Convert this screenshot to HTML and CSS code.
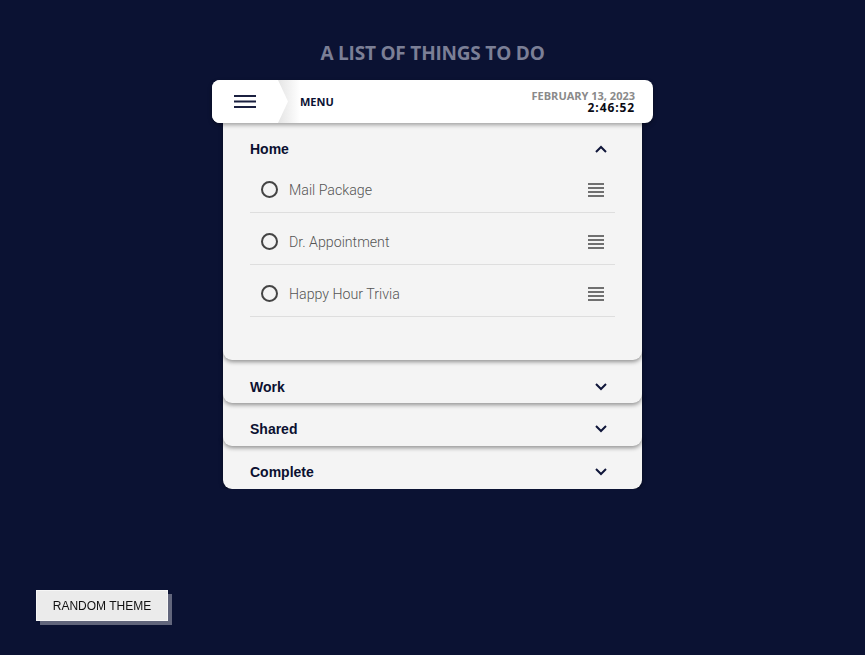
FILE: index.html
```html
<!DOCTYPE html>
<html lang="en">
<head>
  <meta charset="UTF-8" />
  <meta name="viewport" content="width=device-width, initial-scale=1.0"/>
  <title>A list of things to do</title>
  <link rel="stylesheet" href="styles.css">
</head>
<body>
  <div class="app">
    <h1 class="title">A LIST OF THINGS TO DO</h1>

    <header class="topbar">
      <div class="burger">
        <svg width="22" height="13" viewBox="0 0 22 13"><path d="M0 1h22M0 6.5h22M0 12h22" stroke="#1b2040" stroke-width="2"/></svg>
      </div>
      <div class="menu-label">MENU</div>
      <div class="clock">
        <span class="date">FEBRUARY 13, 2023</span>
        <span class="time">2:46:52</span>
      </div>
    </header>

    <section class="group open g1">
      <div class="group-head">
        <span>Home</span>
        <svg class="chev" width="12" height="8" viewBox="0 0 12 8"><path d="M1 7l5-5 5 5" fill="none" stroke="#10163a" stroke-width="2"/></svg>
      </div>
      <ul class="tasks">
        <li>
          <span class="check"></span>
          <span class="task-name">Mail Package</span>
          <svg class="drag" width="16" height="14" viewBox="0 0 16 14"><path d="M0 1h16M0 5h16M0 9h16M0 13h16" stroke="#444" stroke-width="1.6"/></svg>
        </li>
        <li>
          <span class="check"></span>
          <span class="task-name">Dr. Appointment</span>
          <svg class="drag" width="16" height="14" viewBox="0 0 16 14"><path d="M0 1h16M0 5h16M0 9h16M0 13h16" stroke="#444" stroke-width="1.6"/></svg>
        </li>
        <li>
          <span class="check"></span>
          <span class="task-name">Happy Hour Trivia</span>
          <svg class="drag" width="16" height="14" viewBox="0 0 16 14"><path d="M0 1h16M0 5h16M0 9h16M0 13h16" stroke="#444" stroke-width="1.6"/></svg>
        </li>
      </ul>
    </section>

    <section class="group g2">
      <div class="group-head">
        <span>Work</span>
        <svg class="chev" width="12" height="8" viewBox="0 0 12 8"><path d="M1 1l5 5 5-5" fill="none" stroke="#10163a" stroke-width="2"/></svg>
      </div>
    </section>

    <section class="group g3">
      <div class="group-head">
        <span>Shared</span>
        <svg class="chev" width="12" height="8" viewBox="0 0 12 8"><path d="M1 1l5 5 5-5" fill="none" stroke="#10163a" stroke-width="2"/></svg>
      </div>
    </section>

    <section class="group g4">
      <div class="group-head">
        <span>Complete</span>
        <svg class="chev" width="12" height="8" viewBox="0 0 12 8"><path d="M1 1l5 5 5-5" fill="none" stroke="#10163a" stroke-width="2"/></svg>
      </div>
    </section>
  </div>

  <button class="theme-btn">RANDOM THEME</button>
</body>
</html>
```

FILE: styles.css
```css
body { margin: 0; background: #0b1233; font-family: 'Open Sans', sans-serif; }
.app { width: 441px; margin: 0 auto; }
.title { margin: 0; padding-top: 40px; height: 26px; line-height: 26px; text-align: center; font-size: 19px; font-weight: 700; color: #7b7f96; letter-spacing: -0.2px; }
.topbar { position: relative; z-index: 10; margin-top: 14px; height: 43px; background: #fff; border-radius: 8px; display: flex; align-items: center; box-shadow: 0 2px 4px rgba(0,0,0,0.35); overflow: hidden; }
.burger { position: relative; width: 66px; height: 100%; display: flex; align-items: center; justify-content: center; background: #fff; z-index: 2; }
.burger::after { content: ""; position: absolute; right: -10px; top: 0; width: 10px; height: 100%; background: #fff; clip-path: polygon(0 0, 100% 50%, 0 100%); }
.menu-label { align-self: stretch; display: flex; align-items: center; padding-left: 22px; font-size: 11px; font-weight: 700; color: #0b1233; background: linear-gradient(to right, #e4e4e4 0, #fff 22px); }
.clock { margin-left: auto; padding-right: 18px; display: flex; flex-direction: column; align-items: flex-end; }
.date { font-size: 11px; line-height: 12px; font-weight: 700; color: #8a8a8a; }
.time { font-size: 12px; line-height: 12px; font-weight: 700; color: #0b0b14; letter-spacing: 0.9px; }
.group { position: relative; margin: -10px 11px 0; padding: 25px 27px 6px; background: #f4f4f4; border-radius: 0 0 9px 9px; box-shadow: 0 2px 4px rgba(0,0,0,0.4); }
.group.open { margin-top: 0; padding-top: 15px; padding-bottom: 43px; }
.g1 { z-index: 4; }
.g2 { z-index: 3; }
.g3 { z-index: 2; }
.g4 { z-index: 1; }
.group-head { display: flex; align-items: center; justify-content: space-between; height: 22px; padding-right: 8px; font-family: 'Liberation Sans', Arial, sans-serif; font-size: 14px; font-weight: 700; color: #0b1030; }
.g2 .group-head { margin-top: 1px; margin-bottom: -1px; }
.tasks { list-style: none; margin: 1px 0 0; padding: 0; }
.tasks li { height: 45px; padding: 6px 11px 0; display: flex; align-items: center; border-bottom: 1px solid #dedede; }
.check { width: 13px; height: 13px; border: 2px solid #444; border-radius: 50%; flex-shrink: 0; }
.task-name { margin-left: 11px; font-family: Roboto, sans-serif; font-weight: 300; font-size: 14.2px; color: #555; }
.drag { margin-left: auto; }
.theme-btn { position: fixed; left: 36px; bottom: 34px; width: 132px; height: 31px; background: #ebebeb; border: 1px solid #f6f6f6; box-shadow: 4px 4px 0 #62667c; font-family: 'Liberation Sans', Arial, sans-serif; font-size: 12px; color: #111; padding: 0; cursor: pointer; }
```
